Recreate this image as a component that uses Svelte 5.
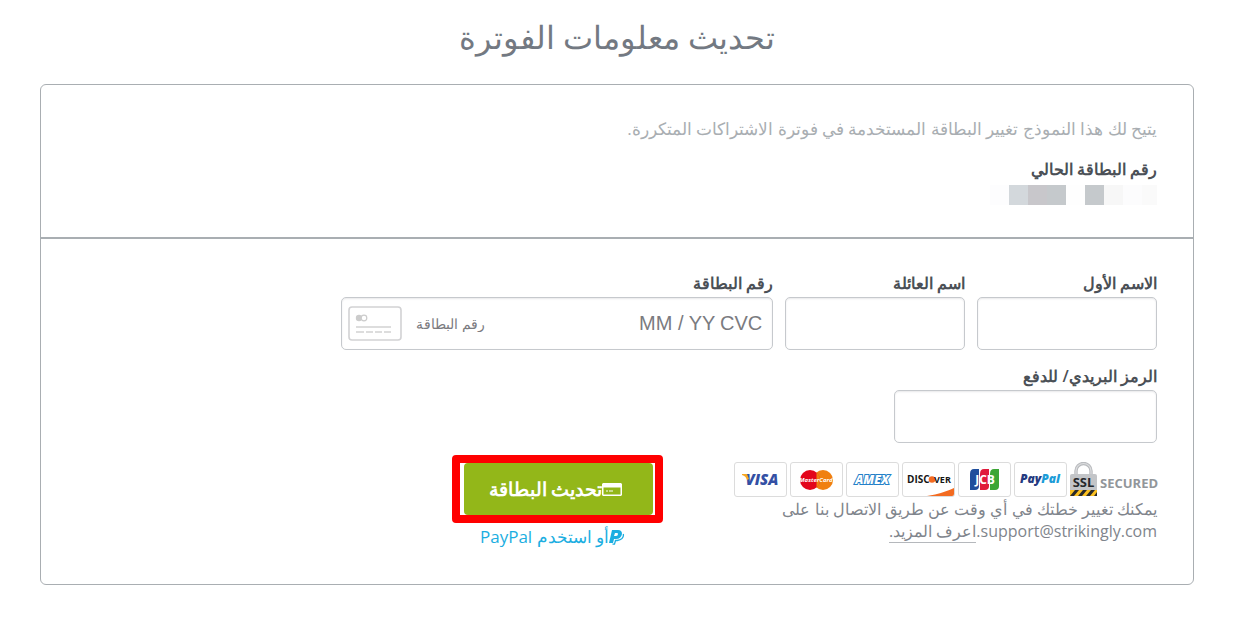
<script lang="ts">
	let firstName = $state('');
	let lastName = $state('');
	let cardNumber = $state('');
	let expiry = $state('');
	let cvc = $state('');
	let postalCode = $state('');

	/* Blocks that hide the digits of the saved card, right to left */
	const mask: string[] = ['#fafafa', '#fcfcfd', '#f7f7f7', '#c5c9cc', '#fefefe', '#c5c9cc', '#c8c7cb', '#d3d8dc', '#fdfdfe'];
</script>

<svelte:head>
	<title>تحديث معلومات الفوترة</title>
</svelte:head>

<main class="billing" dir="rtl">
	<h1>تحديث معلومات الفوترة</h1>

	<form class="panel" onsubmit={(e) => e.preventDefault()}>
		<section class="current">
			<p class="intro">يتيح لك هذا النموذج تغيير البطاقة المستخدمة في فوترة الاشتراكات المتكررة.</p>
			<h2>رقم البطاقة الحالي</h2>
			<div class="mask">
				{#each mask as color}
					<span style="background: {color}"></span>
				{/each}
			</div>
		</section>

		<section class="details">
			<div class="fields">
				<div class="field name">
					<label for="first-name">الاسم الأول</label>
					<input id="first-name" class="box" type="text" bind:value={firstName} />
				</div>
				<div class="field name">
					<label for="last-name">اسم العائلة</label>
					<input id="last-name" class="box" type="text" bind:value={lastName} />
				</div>
				<div class="field card">
					<label for="card-number">رقم البطاقة</label>
					<div class="box card-box" dir="ltr">
						<svg class="card-icon" width="54" height="35" viewBox="0 0 54 35" aria-hidden="true">
							<rect x="1" y="1" width="52" height="33" rx="3" fill="#fff" stroke="#d2d2d4" stroke-width="1.6" />
							<circle cx="11" cy="12" r="3.2" fill="#ccc" />
							<circle cx="16" cy="12" r="2.8" fill="#fff" stroke="#ccc" stroke-width="1.2" />
							<path d="M8 21H43" stroke="#ddd" stroke-width="2" />
							<path d="M8 26h8m2 0h7m2 0h7m2 0h7" stroke="#ddd" stroke-width="2" />
						</svg>
						<input id="card-number" class="number" type="text" placeholder="رقم البطاقة" bind:value={cardNumber} />
						<input class="expiry" type="text" placeholder="MM / YY" aria-label="MM / YY" bind:value={expiry} />
						<input class="cvc" type="text" placeholder="CVC" aria-label="CVC" bind:value={cvc} />
					</div>
				</div>
			</div>

			<div class="field postal">
				<label for="postal-code">الرمز البريدي/ للدفع</label>
				<input id="postal-code" class="box" type="text" bind:value={postalCode} />
			</div>

			<div class="bottom">
				<div class="info">
					<div class="badges" dir="ltr">
						<svg class="badge" viewBox="1 1 51 33" role="img" aria-label="Visa">
							<text x="28" y="23" text-anchor="middle" font-size="15" font-weight="800" font-style="italic" fill="#3450a4">VISA</text>
							<path d="M8 12h5l2 5-2 1q-1-4-5-5z" fill="#f7a823" />
						</svg>
						<svg class="badge" viewBox="1 1 51 33" role="img" aria-label="MasterCard">
							<circle cx="33" cy="18" r="10" fill="#f08010" />
							<circle cx="20" cy="18" r="10" fill="#e3051b" />
							<path d="M26.5 10.4a10 10 0 0 1 0 15.2" fill="#f08010" />
							<text x="26" y="20" text-anchor="middle" font-size="6" font-weight="700" font-style="italic" fill="#fff">MasterCard</text>
						</svg>
						<svg class="badge" viewBox="1 1 51 33" role="img" aria-label="American Express">
							<text x="26" y="22" text-anchor="middle" font-size="12" font-weight="800" font-style="italic" fill="#fff" stroke="#2480c8" stroke-width="2" paint-order="stroke">AMEX</text>
						</svg>
						<svg class="badge" viewBox="1 1 51 33" role="img" aria-label="Discover">
							<path d="M25 34Q42 31 52 26v8z" fill="#f36b21" />
							<text x="5" y="21" font-size="10" font-weight="700" fill="#151515">DISC</text>
							<circle cx="30" cy="17.5" r="3.3" fill="#f36b21" />
							<text x="32" y="21" font-size="9" font-weight="700" fill="#151515">VER</text>
						</svg>
						<svg class="badge" viewBox="1 1 51 33" role="img" aria-label="JCB">
							<path d="M16 7h5v17q0 4-4 4h-5V12q0-5 4-5z" fill="#1f4e9c" />
							<path d="M26 7h5v17q0 4-4 4h-5V12q0-5 4-5z" fill="#e01b3c" />
							<path d="M36 7h5v17q0 4-4 4h-5V12q0-5 4-5z" fill="#3ca535" />
							<text x="27" y="22" text-anchor="middle" font-size="12" font-weight="700" fill="#fff">JCB</text>
						</svg>
						<svg class="badge" viewBox="1 1 51 33" role="img" aria-label="PayPal">
							<text x="6" y="21" font-size="12" font-weight="800" font-style="italic" fill="#243a80">Pay<tspan fill="#1b9cd8">Pal</tspan></text>
						</svg>
						<svg class="lock" width="27" height="35" viewBox="0 0 27 35" role="img" aria-label="SSL">
							<path d="M6 14V9a7.5 7.5 0 0 1 15 0v5" fill="none" stroke="#b9bbbe" stroke-width="3.4" />
							<path d="M6 14V9a7.5 7.5 0 0 1 15 0v5" fill="none" stroke="#dcdddf" stroke-width="1.2" />
							<rect y="12" width="27" height="22" rx="2" fill="#c3c5c8" />
							<rect y="28" width="27" height="6" fill="#fbc020" />
							<path d="M0 34l5-6h4l-5 6zM8 34l5-6h4l-5 6zM16 34l5-6h4l-5 6zM24 34l3-4v4z" fill="#2b2b2b" />
							<text x="13.5" y="25" text-anchor="middle" font-size="13" font-weight="700" fill="#26292c">SSL</text>
						</svg>
						<span class="secured">SECURED</span>
					</div>
					<p>يمكنك تغيير خطتك في أي وقت عن طريق الاتصال بنا على support@strikingly.com.<a href="#more">اعرف المزيد.</a></p>
				</div>

				<div class="actions">
					<div class="highlight">
						<button type="submit">
							<svg width="20" height="13" viewBox="0 0 20 13" aria-hidden="true">
								<path fill="#fff" fill-rule="evenodd" d="M1 0h18l1 1v11l-1 1H1l-1-1V1zM1.500 4.500v7h17v-7z" />
								<path d="M4 8h2m1 0h4" stroke="#fff" stroke-width="1.2" />
							</svg>
							<span>تحديث البطاقة</span>
						</button>
					</div>
					<a class="paypal" href="#paypal">
						<svg width="16" height="15" viewBox="0 0 16 15" aria-hidden="true">
							<path fill="#1baee1" fill-rule="evenodd" d="M3 0h6q4 0 4 4-1 5-6 5H5l-1 4H0zM6 3L5 6h2q2 0 2-2 0-1-1-1z" />
							<path d="M14.3 4q1 5-6 6.5H6.5L5.5 14.2H3.5" fill="none" stroke="#1baee1" stroke-width="1.3" />
						</svg>
						<span>أو استخدم PayPal</span>
					</a>
				</div>
			</div>
		</section>
	</form>
</main>

<style>
	:global(body) {
		margin: 0;
		background: #fff;
	}

	.billing {
		padding: 13px 44px 36px 40px;
		font-family: 'Open Sans', 'Noto Sans', sans-serif;
		font-size: 16px;
		color: #4b5056;
	}

	h1 {
		margin: 0 0 23px;
		font-size: 32px;
		line-height: 48px;
		font-weight: 300;
		text-align: center;
		color: #737982;
	}

	.panel {
		border: 1px solid #a9aeb2;
		border-radius: 6px;
	}

	.current {
		padding: 32px 36px;
		border-bottom: 2px solid #a9aeb2;
	}

	.intro {
		margin: 0 0 16px;
		font-size: 17px;
		line-height: 24px;
		color: #a9aeb2;
	}

	h2 {
		margin: 0 0 4px;
		font-size: 16px;
		line-height: 24px;
		font-weight: 600;
	}

	.mask {
		display: flex;
		height: 20px;
	}

	.mask span {
		width: 19px;
	}

	.mask span:first-child {
		width: 15px;
	}

	.details {
		padding: 32px 36px 34px;
	}

	.fields {
		display: flex;
		gap: 12px;
		margin-bottom: 14px;
	}

	.field {
		display: flex;
		flex-direction: column;
	}

	.name {
		width: 180px;
	}

	.card {
		width: 432px;
	}

	.postal {
		width: 263px;
		margin-bottom: 12px;
	}

	label {
		height: 26px;
		line-height: 24px;
		font-weight: 600;
	}

	.box {
		box-sizing: border-box;
		width: 100%;
		height: 53px;
		padding: 0 12px;
		border: 1px solid #c6c9cd;
		border-radius: 5px;
		background: #fff;
		box-shadow: inset 0 1px 2px #e8e8ea;
		font: inherit;
	}

	.card-box {
		display: flex;
		align-items: center;
		padding: 0 6px;
	}

	.card-box input {
		box-sizing: border-box;
		min-width: 0;
		padding: 0;
		border: 0;
		outline: 0;
		background: none;
		font: 20px 'Liberation Sans', sans-serif;
	}

	.card-box input::placeholder {
		color: #7b7b7f;
	}

	.card-box .number {
		flex: 1;
		margin-left: 14px;
		font-size: 14px;
	}

	.card-box .expiry {
		width: 81px;
	}

	.card-box .cvc {
		width: 46px;
	}

	.bottom {
		display: flex;
		align-items: flex-start;
		gap: 71px;
	}

	.info {
		width: 423px;
		padding-top: 7px;
	}

	.info p {
		width: 376px;
		margin: 0;
		line-height: 22px;
		color: #7f858c;
	}

	.info a {
		color: inherit;
		text-decoration: none;
		border-bottom: 1px solid #b5b8bc;
	}

	.badges {
		display: flex;
		align-items: center;
		gap: 3px;
		margin-bottom: 1px;
	}

	.badge {
		box-sizing: border-box;
		flex: none;
		width: 53px;
		height: 35px;
		border: 1px solid #dcdcdc;
		border-radius: 3px;
	}

	.lock {
		flex: none;
	}

	.secured {
		padding-top: 6px;
		font-size: 13px;
		line-height: 24px;
		font-weight: 700;
		color: #92969a;
	}

	.actions {
		text-align: center;
	}

	.highlight {
		padding: 0 2px 0 4px;
		border: 8px solid #f00;
		border-radius: 4px;
	}

	button {
		display: flex;
		align-items: center;
		justify-content: center;
		width: 189px;
		height: 52px;
		padding: 0 6px 0 0;
		border: 0;
		border-radius: 4px;
		background: #93b719;
		color: #fff;
		font: 700 19px 'Open Sans', 'Noto Sans', sans-serif;
	}

	.paypal {
		display: inline-flex;
		align-items: center;
		margin-top: 2px;
		padding-right: 10px;
		font-size: 17px;
		line-height: 24px;
		color: #1baee1;
		text-decoration: none;
	}
</style>
